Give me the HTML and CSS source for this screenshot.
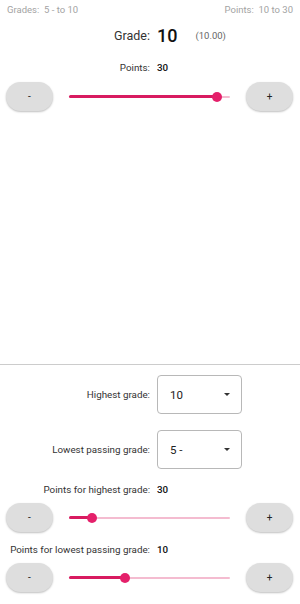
FILE: index.html
```html
<!DOCTYPE html>
<html lang="en">
  <head>
    <meta charset="UTF-8" />
    <meta name="viewport" content="width=device-width, initial-scale=1.0" />
    <title>Grade Calculator</title>
    <link rel="stylesheet" href="styles.css">
  </head>
  <body>
    <div class="app">
      <div class="upper">
        <div class="top-bar">
          <span>Grades:&nbsp; 5 - to 10</span>
          <span>Points:&nbsp; 10 to 30</span>
        </div>

        <div class="pair grade-row">
          <span class="label">Grade:</span>
          <span class="value">
            <span class="grade">10</span>
            <span class="exact">(10.00)</span>
          </span>
        </div>

        <div class="pair points-row">
          <span class="label">Points:</span>
          <span class="value strong">30</span>
        </div>

        <div class="slider-row">
          <button class="step">-</button>
          <div class="slider">
            <div class="track"></div>
            <div class="fill" style="width: 92%"></div>
            <div class="thumb" style="left: 92%"></div>
          </div>
          <button class="step">+</button>
        </div>
      </div>

      <div class="divider"></div>

      <div class="lower">
        <div class="pair select-row first">
          <span class="label">Highest grade:</span>
          <span class="value">
            <span class="select"><span>10</span><span class="arrow"></span></span>
          </span>
        </div>

        <div class="pair select-row">
          <span class="label">Lowest passing grade:</span>
          <span class="value">
            <span class="select"><span>5 -</span><span class="arrow"></span></span>
          </span>
        </div>

        <div class="pair points-row setting">
          <span class="label">Points for highest grade:</span>
          <span class="value strong">30</span>
        </div>

        <div class="slider-row">
          <button class="step">-</button>
          <div class="slider">
            <div class="track"></div>
            <div class="fill" style="width: 14.2%"></div>
            <div class="thumb" style="left: 14.2%"></div>
          </div>
          <button class="step">+</button>
        </div>

        <div class="pair points-row setting">
          <span class="label">Points for lowest passing grade:</span>
          <span class="value strong">10</span>
        </div>

        <div class="slider-row">
          <button class="step">-</button>
          <div class="slider">
            <div class="track"></div>
            <div class="fill" style="width: 34.6%"></div>
            <div class="thumb" style="left: 34.6%"></div>
          </div>
          <button class="step">+</button>
        </div>
      </div>
    </div>
  </body>
</html>
```

FILE: styles.css
```css
body,
html {
  height: 100%;
  margin: 0;
  overflow: hidden;
  font-family: Roboto, "Noto Sans", sans-serif;
  background: #fff;
}
.app {
  display: flex;
  flex-direction: column;
  height: 100%;
}
.upper {
  flex: 1;
}
.top-bar {
  display: flex;
  justify-content: space-between;
  height: 20px;
  line-height: 20px;
  padding: 0 7px;
  font-size: 9.5px;
  color: #a3a3a3;
}
.pair {
  display: grid;
  grid-template-columns: 1fr 1fr;
  align-items: center;
}
.pair .label {
  text-align: right;
  color: #333;
}
.pair .value {
  padding-left: 7px;
  display: flex;
  align-items: center;
}
.grade-row {
  margin-top: 3px;
  height: 24px;
}
.grade-row .label {
  font-size: 12.5px;
}
.grade {
  font-size: 18px;
  font-weight: 500;
  color: #111;
}
.exact {
  margin-left: 18px;
  font-size: 9.5px;
  color: #666;
}
.points-row {
  margin-top: 13px;
  height: 14px;
  font-size: 9.8px;
}
.strong {
  font-weight: 500;
  color: #111;
}
.slider-row {
  display: flex;
  align-items: center;
  gap: 16px;
  margin-top: 8px;
  padding: 0 7px 0 6px;
}
.step {
  width: 47px;
  height: 29px;
  border: none;
  border-radius: 15px;
  background: #dedede;
  box-shadow: 0 1px 2px rgba(0, 0, 0, 0.25);
  font-family: inherit;
  font-size: 10px;
  color: #222;
  padding: 0;
}
.slider {
  position: relative;
  flex: 1;
  height: 29px;
}
.track,
.fill {
  position: absolute;
  left: 0;
  top: 50%;
  border-radius: 2px;
}
.track {
  right: 0;
  height: 2px;
  margin-top: -1px;
  background: #f4bcd0;
}
.fill {
  height: 3px;
  margin-top: -1.5px;
  background: #d81b60;
}
.thumb {
  position: absolute;
  top: 50%;
  width: 10px;
  height: 10px;
  margin: -5px 0 0 -5px;
  border-radius: 50%;
  background: #e4206a;
}
.divider {
  height: 1px;
  background: #cccccc;
}
.lower {
  padding-bottom: 12px;
}
.select-row {
  margin-top: 16px;
  height: 39px;
  font-size: 9.8px;
}
.select-row.first {
  margin-top: 10px;
}
.select {
  display: flex;
  align-items: center;
  justify-content: space-between;
  box-sizing: border-box;
  width: 85px;
  height: 39px;
  padding: 0 11px 0 12px;
  border: 1px solid #b8b8b8;
  border-radius: 4px;
  font-size: 11.5px;
  color: #222;
}
.arrow {
  width: 0;
  height: 0;
  border-left: 3.5px solid transparent;
  border-right: 3.5px solid transparent;
  border-top: 3.5px solid #333;
}
.setting {
  margin-top: 13px;
}
.setting + .slider-row {
  margin-top: 7px;
}
.slider-row + .setting {
  margin-top: 10px;
}
```
